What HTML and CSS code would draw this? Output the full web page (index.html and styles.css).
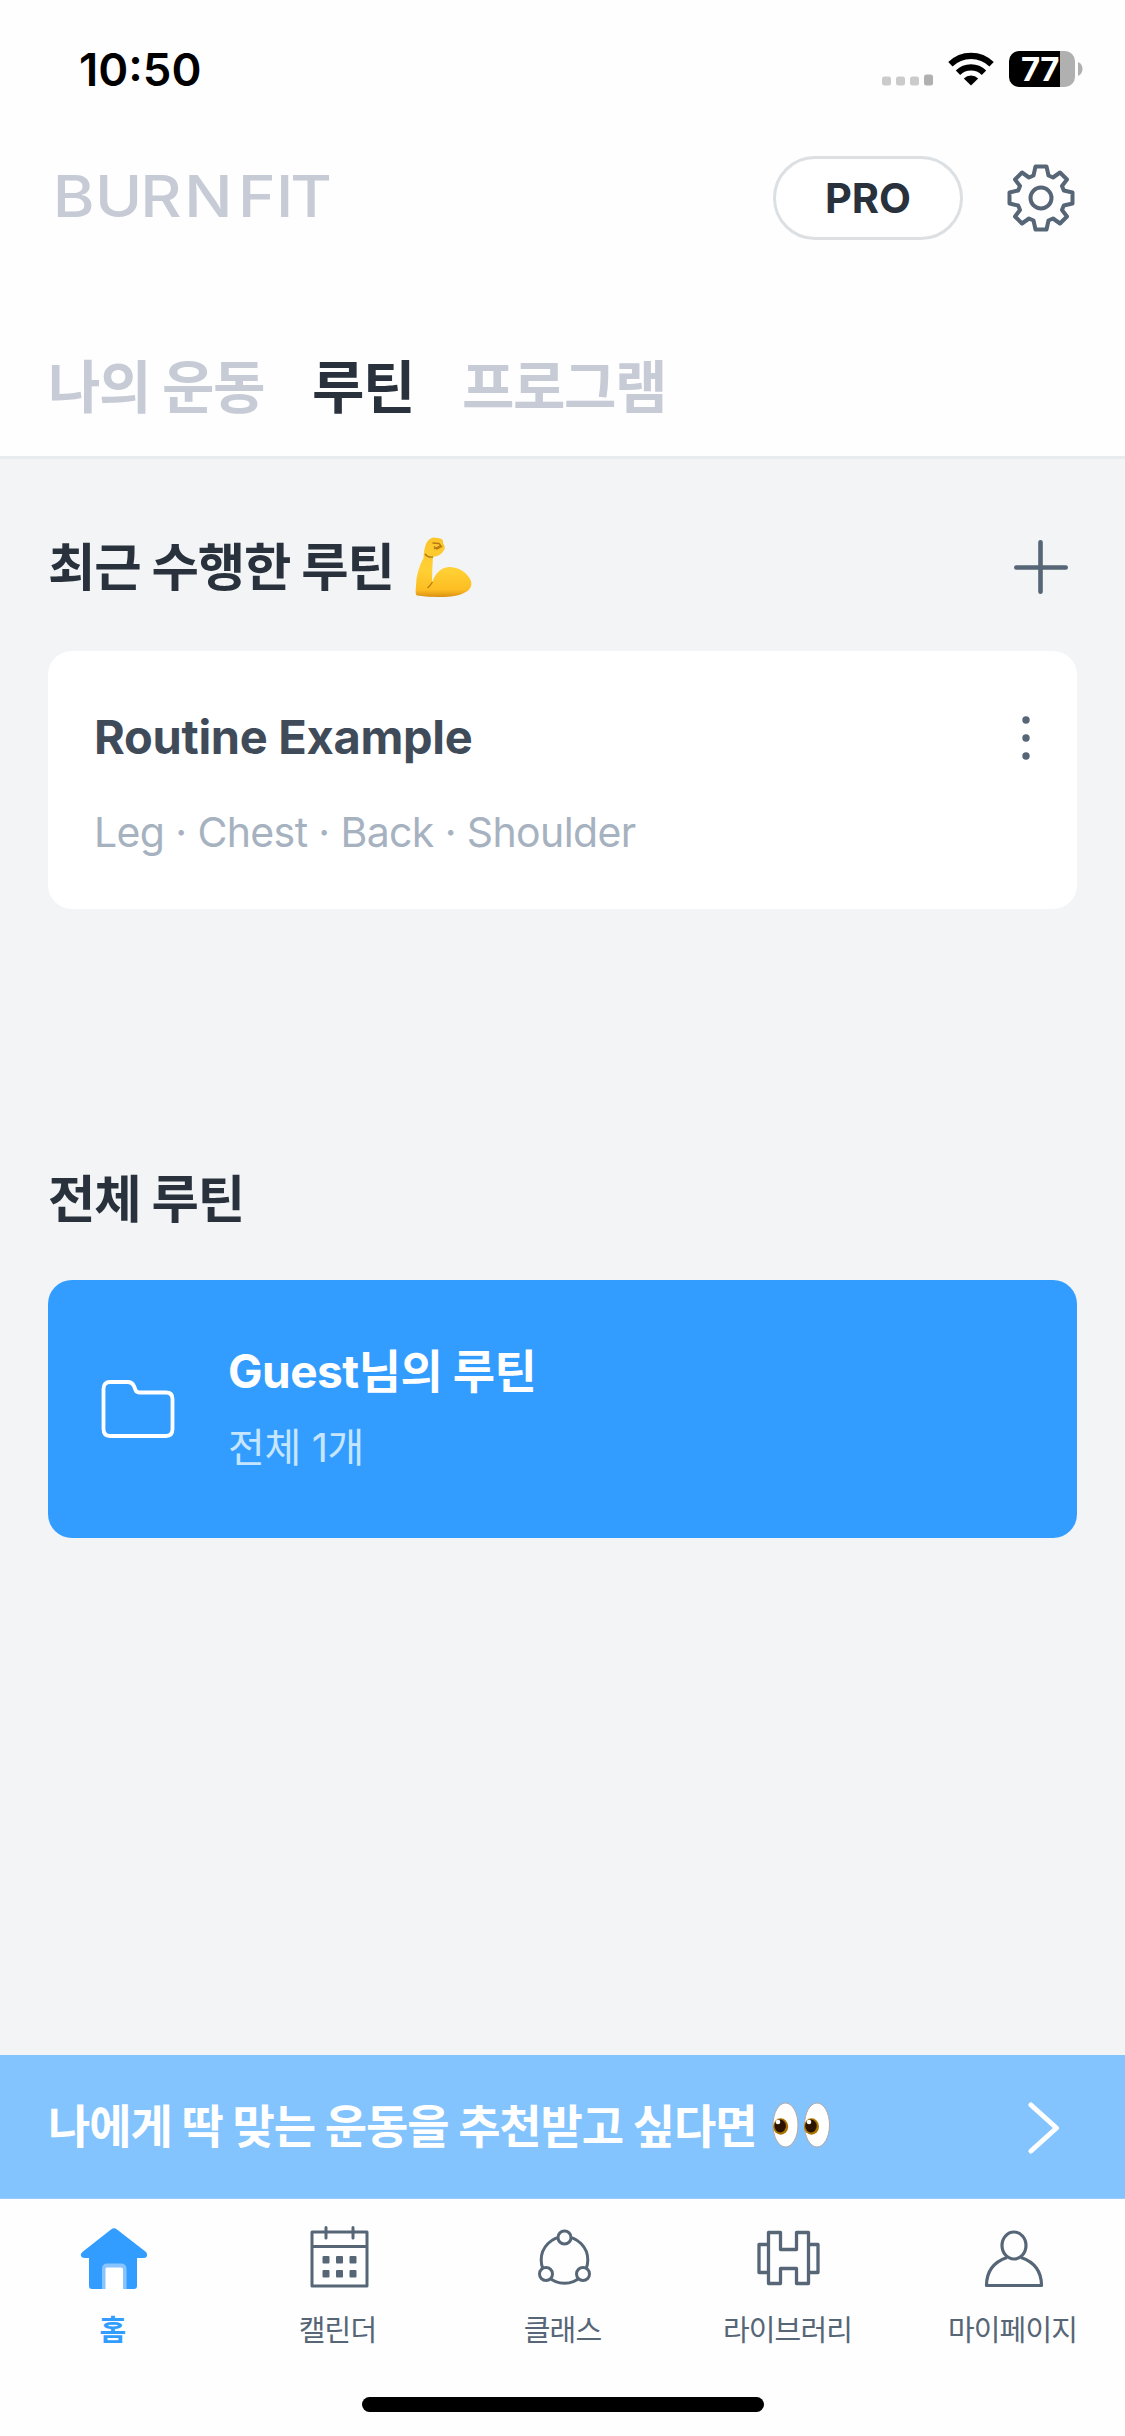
FILE: index.html
```html
<!DOCTYPE html>
<html lang="ko">
<head>
<meta charset="utf-8">
<title>BURN FIT</title>
<link rel="stylesheet" href="styles.css">
</head>
<body>
<div class="app">
  <div class="status">
    <span class="time">10:50</span>
    <div class="indicators">
      <svg class="signal" width="52" height="12" viewBox="0 0 52 12"><g fill="#cbcbcb"><rect x="0" y="2.5" width="9" height="9" rx="2.5"/><rect x="14" y="2.5" width="9" height="9" rx="2.5"/><rect x="28" y="2.5" width="9" height="9" rx="2.5"/></g><rect x="42" y="0.5" width="9" height="11" rx="2.5" fill="#b0b0b0"/></svg>
      <svg class="wifi" width="46" height="34" viewBox="0 0 46 34"><g fill="none" stroke="#000" stroke-width="6.2"><path d="M2.4 12.2a29.4 29.4 0 0 1 41.200 0"/><path d="M10 20.800a18.400 18.400 0 0 1 26 0"/></g><path d="M15.800 26.400a10.200 10.200 0 0 1 14.400 0L23 33.500z"/></svg>
      <div class="battery"><span class="level">77</span></div>
      <svg class="nub" width="5" height="14" viewBox="0 0 5 14"><path d="M0 0q4.500 2 4.500 7t-4.500 7z" fill="#b0b0b0"/></svg>
    </div>
  </div>

  <header class="topbar">
    <svg class="logo" width="280" height="52" viewBox="0 0 280 52"><text transform="scale(1.1 1)" y="45" x="-3 35.5 76.5 116.5 165.5 200 213">BURNFIT</text></svg>
    <div class="actions">
      <button class="pro">PRO</button>
      <svg class="gear" width="68" height="68" viewBox="-34 -34 68 68" fill="none" stroke="#566676" stroke-width="4" stroke-linejoin="round"><circle r="10.500"/><path d="M-5.500 -31.500H5.500L7.500 -22.500L12 -20.500L19 -25.500L26 -18.500L21 -12L22.800 -7.500L31.500 -5.500V5.500L22.800 7.500L21 12L26 18.500L19 25.500L12 20.500L7.500 22.500L5.500 31.500H-5.500L-7.500 22.500L-12 20.500L-19 25.500L-26 18.500L-21 12L-22.800 7.500L-31.500 5.500V-5.500L-22.800 -7.500L-21 -12L-26 -18.500L-19 -25.500L-12 -20.500L-7.500 -22.500Z"/></svg>
    </div>
  </header>

  <nav class="tabs">
    <span class="tab">나의 운동</span>
    <span class="tab active">루틴</span>
    <span class="tab">프로그램</span>
  </nav>

  <main class="content">
    <div class="section-head">
      <h2>최근 수행한 루틴</h2>
      <svg class="arm" width="58" height="62" viewBox="0 0 58 62">
        <defs><linearGradient id="skin" x1="0" y1="0" x2="0" y2="1"><stop offset="0" stop-color="#fbc52c"/><stop offset="0.550" stop-color="#ffd034"/><stop offset="0.880" stop-color="#fdbd22"/><stop offset="1" stop-color="#d98f14"/></linearGradient></defs>
        <path d="M12 6Q16 0 22 2Q29 2 28 7Q31 12 29 14Q26 20 18 21Q17 33 17 46Q23 31 35 31Q50 32 56 45Q59 57 36 60.500Q20 62 2 59.500Q0 59 1 50Q1 36 8.500 22Q9 11 12 6Z" fill="url(#skin)"/>
        <path d="M17.500 7L24 7.500L26.500 10.500L22 13L19 10.500M19 13L25 10M18 21Q13 22 10 18M17.500 46Q15 50 12.500 52" fill="none" stroke="#b77812" stroke-width="1.300"/>
      </svg>
      <svg class="plus" width="54" height="54" viewBox="0 0 54 54"><path d="M2.300 27.500H51.700M26.500 2.300V51.700" stroke="#566676" stroke-width="4.600" stroke-linecap="round"/></svg>
    </div>

    <article class="card routine">
      <div class="routine-top">
        <h3>Routine Example</h3>
        <svg width="8" height="44" viewBox="0 0 8 44" fill="#566676"><circle cx="4" cy="4" r="3.700"/><circle cx="4" cy="22" r="3.700"/><circle cx="4" cy="40" r="3.700"/></svg>
      </div>
      <p>Leg · Chest · Back · Shoulder</p>
    </article>

    <h2 class="all-title">전체 루틴</h2>
    <article class="card folder">
      <svg width="74" height="60" viewBox="0 0 74 60" fill="none" stroke="#fff" stroke-width="3.800" stroke-linejoin="round"><path d="M9 3H27Q31 3 33 7L34.500 11Q35.500 13.500 39 13.500H65Q71.500 13.500 71.500 20V50Q71.500 57 65 57H9Q2.500 57 2.500 50V10Q2.500 3 9 3Z"/></svg>
      <div class="folder-text">
        <h3>Guest님의 루틴</h3>
        <p>전체 1개</p>
      </div>
    </article>
  </main>

  <div class="banner">
    <span>나에게 딱 맞는 운동을 추천받고 싶다면</span>
    <svg class="eyes" width="60" height="48" viewBox="0 0 60 48">
      <g fill="#fff" stroke="#b3a8a4" stroke-width="1"><ellipse cx="14.500" cy="24" rx="12.500" ry="22"/><ellipse cx="46" cy="24" rx="12.500" ry="22"/></g>
      <g fill="#a97400"><ellipse cx="9.700" cy="25.500" rx="7.500" ry="8.300"/><ellipse cx="40.500" cy="25.500" rx="7.500" ry="8.300"/></g>
      <g fill="#2b1300"><ellipse cx="9.200" cy="25" rx="5.700" ry="6.500"/><ellipse cx="40" cy="25" rx="5.700" ry="6.500"/></g>
      <g fill="#fff"><circle cx="7" cy="21" r="2.300"/><circle cx="38" cy="21" r="2.300"/></g>
    </svg>
    <svg class="chevron" width="32" height="52" viewBox="0 0 32 52"><path d="M3 3L28.500 26L3 49" fill="none" stroke="#fff" stroke-width="5" stroke-linecap="round" stroke-linejoin="round"/></svg>
  </div>

  <nav class="bottom">
    <a class="item current">
      <svg width="72" height="64" viewBox="0 0 72 64"><path d="M34 3.500Q37 1 40 3.500L69 26Q71 28.500 69.500 31Q69 32 66 32H60V60Q60 63 57 63H15Q12 63 12 60V32H8Q4 32 3.800 29Q3.500 27.500 6 25.500Z" fill="#339dff"/><path d="M25 63V43Q25 37.500 30 37.500H44Q49.500 37.500 49.500 43V63Z" fill="#88c5ff"/><path d="M28.500 64V43Q28.500 41.500 30 41.500H44Q46 41.500 46 43V64Z" fill="#fff"/></svg>
      <span>홈</span>
    </a>
    <a class="item">
      <svg width="72" height="64" viewBox="0 0 72 64" fill="none" stroke="#566676" stroke-width="3"><path d="M10 6H65V60H10ZM10 20.500H65M24 1.500V12M51 1.500V12" stroke-linecap="round" stroke-linejoin="round"/><g fill="#566676" stroke="none"><rect x="20.500" y="30" width="7" height="7.500" rx="1"/><rect x="34" y="30" width="7" height="7.500" rx="1"/><rect x="47.500" y="30" width="7" height="7.500" rx="1"/><rect x="20.500" y="44" width="7" height="7.500" rx="1"/><rect x="34" y="44" width="7" height="7.500" rx="1"/><rect x="47.500" y="44" width="7" height="7.500" rx="1"/></g></svg>
      <span>캘린더</span>
    </a>
    <a class="item">
      <svg width="72" height="64" viewBox="0 0 72 64" fill="none" stroke="#566676" stroke-width="3"><circle cx="37.500" cy="34" r="23.300"/><g fill="#fff"><circle cx="37.500" cy="11.500" r="6.500"/><circle cx="19" cy="48" r="6.500"/><circle cx="56" cy="48" r="6.500"/></g></svg>
      <span>클래스</span>
    </a>
    <a class="item">
      <svg width="72" height="64" viewBox="0 0 72 64" fill="none" stroke="#566676" stroke-width="3.300" stroke-linejoin="round"><path d="M16.500 6.500H28.500V23.500H44.500V6.500H56.500V57.500H44.500V42.500H28.500V57.500H16.500ZM16.500 18.500H7V46.500H16.500M56.500 18.500H66V46.500H56.500"/></svg>
      <span>라이브러리</span>
    </a>
    <a class="item">
      <svg width="72" height="64" viewBox="0 0 72 64" fill="none" stroke="#566676" stroke-width="3.200" stroke-linejoin="round"><ellipse cx="37" cy="19.500" rx="12" ry="13.500"/><path d="M30 31.500Q9.500 38.500 9.500 59.500H64.500Q64.500 38.500 44 31.500"/></svg>
      <span>마이페이지</span>
    </a>
  </nav>
  <div class="home-bar"></div>
</div>
</body>
</html>
```
FILE: styles.css
```css
* { box-sizing: border-box; margin: 0; padding: 0; }

body {
  font-family: Inter, "Noto Sans CJK KR", sans-serif;
  background: #fff;
}

.app {
  width: 1125px;
  height: 2436px;
  display: flex;
  flex-direction: column;
  background: #fefefe;
  overflow: hidden;
}

.app svg { display: block; flex: none; }

/* Status bar */
.status {
  height: 138px;
  padding: 0 42px 0 79px;
  display: flex;
  justify-content: space-between;
  align-items: center;
}
.time { font-size: 45.500px; font-weight: 600; }
.indicators { display: flex; align-items: center; }
.signal { margin: 21px 14px 0 0; }
.wifi { margin-right: 15px; }
.battery {
  width: 66px;
  height: 36px;
  border-radius: 10px;
  background: linear-gradient(90deg, #000 51px, #b0b0b0 51px);
}
.level {
  display: block;
  padding-left: 12px;
  font-size: 33px;
  line-height: 36px;
  font-weight: 700;
  letter-spacing: -0.500px;
  color: #fff;
}
.nub { margin-left: 3px; }

/* Brand and actions */
.topbar {
  height: 120px;
  padding: 0 50px 0 56px;
  display: flex;
  justify-content: space-between;
  align-items: center;
}
.logo { overflow: visible; }
.logo text { font-family: Inter, sans-serif; font-size: 58px; font-weight: 500; fill: #c6cbd5; }
.actions { display: flex; align-items: center; gap: 44px; }
.pro {
  width: 190px;
  height: 84px;
  border: 3px solid #dce0e3;
  border-radius: 42px;
  background: #fff;
  color: #29323c;
  font: 700 41.500px Inter, sans-serif;
}

/* Tabs */
.tabs {
  height: 201px;
  padding: 78px 48px 0;
  display: flex;
  gap: 48px;
  border-bottom: 3px solid #e8ebed;
}
.tab {
  font-size: 57px;
  line-height: 104px;
  font-weight: 700;
  letter-spacing: -1.450px;
  color: #c6cbd5;
  white-space: nowrap;
}
.tab.active { color: #29323c; }

/* Content */
.content {
  height: 1596px;
  padding: 0 48px;
  background: #f2f4f6;
}
h2 {
  font-size: 51.500px;
  line-height: 72px;
  font-weight: 700;
  letter-spacing: -1.150px;
  color: #29323c;
  white-space: nowrap;
}
.section-head {
  height: 192px;
  padding-top: 24px;
  display: flex;
  align-items: center;
}
.arm { margin-left: 21px; }
.plus { margin: 0 9px 0 auto; }
.card { height: 258px; border-radius: 24px; }
.routine { background: #fff; padding: 56px 47px 0 46px; }
.routine-top { display: flex; justify-content: space-between; align-items: center; }
.routine-top svg { margin-top: 2px; }
h3 { font-size: 46px; line-height: 60px; font-weight: 700; color: #3f4b59; white-space: nowrap; }
.routine h3 { font-size: 47px; letter-spacing: -0.300px; }
.routine p {
  margin-top: 38px;
  font-size: 41px;
  line-height: 54px;
  letter-spacing: -0.620px;
  color: #a6b2c0;
  white-space: nowrap;
}
.all-title { margin: 254px 0 45px; }
.folder {
  display: flex;
  align-items: center;
  gap: 53px;
  padding-left: 53px;
  background: #339dff;
}
.folder h3 { color: #fff; letter-spacing: -0.500px; }
.folder p { margin-top: 20px; font-size: 40px; line-height: 54px; color: #c6e5ff; letter-spacing: -0.400px; }
.folder-text { padding-bottom: 2px; }

/* Recommendation banner */
.banner {
  height: 144px;
  padding: 0 65px 0 48px;
  display: flex;
  align-items: center;
  background: #83c4ff;
  border-bottom: 1px solid #9dccf8;
  color: #fff;
  font-size: 46px;
  font-weight: 700;
  letter-spacing: -1.100px;
  white-space: nowrap;
}
.banner span { padding-bottom: 8px; }
.eyes { margin: 0 0 4px 14px; }
.chevron { margin-left: auto; margin-top: 2px; }

/* Bottom navigation */
.bottom { height: 198px; padding-top: 27px; display: flex; }
.item {
  width: 225px;
  display: flex;
  flex-direction: column;
  align-items: center;
  color: #566676;
  font-size: 29px;
  letter-spacing: -0.900px;
}
.item span { margin-top: 21px; line-height: 40px; }
.current { color: #339dff; font-weight: 700; }
.home-bar { width: 402px; height: 15px; margin: 0 auto; border-radius: 8px; background: #000; }
```
